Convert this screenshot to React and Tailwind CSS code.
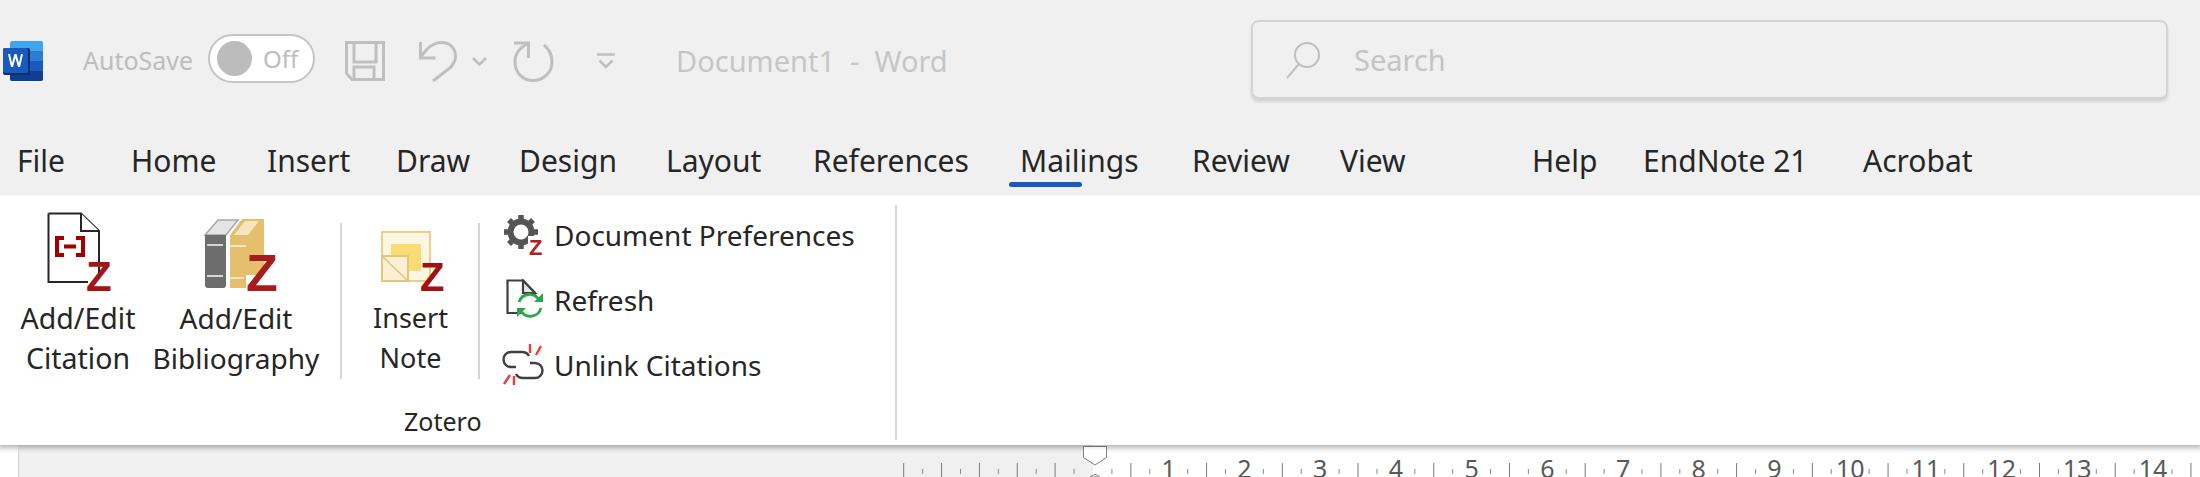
import React from 'react'

const font = { fontFamily: '"Noto Sans", "Open Sans", sans-serif' }

const tabs = [
  ['File', 'w-[114px]'],
  ['Home', 'w-[136px]'],
  ['Insert', 'w-[129px]'],
  ['Draw', 'w-[123px]'],
  ['Design', 'w-[147px]'],
  ['Layout', 'w-[147px]'],
  ['References', 'w-[207px]'],
  ['Mailings', 'w-[172px]'],
  ['Review', 'w-[148px]'],
  ['View', 'w-[192px]'],
  ['Help', 'w-[111px]'],
  ['EndNote 21', 'w-[220px]'],
  ['Acrobat', 'w-[120px]'],
]

function WordLogo() {
  return (
    <svg width="44" height="44" viewBox="0 0 44 44" className="shrink-0">
      <rect x="10" y="2" width="33" height="40" rx="2" fill="#41a5ee" />
      <rect x="10" y="12" width="33" height="10" fill="#2b7cd3" />
      <rect x="10" y="22" width="33" height="10" fill="#185abd" />
      <path d="M10 32h33v8a2 2 0 0 1-2 2H12a2 2 0 0 1-2-2z" fill="#103f91" />
      <rect x="3" y="9" width="27" height="27" rx="2" fill="#0d2f6e" />
      <rect x="3" y="9" width="25" height="25" rx="2" fill="#185abd" />
      <path d="M8 15l3 13h2l2.500-9 2.500 9h2l3-13h-2l-2 9-2.500-9h-2l-2.500 9-2-9z" fill="#fff" />
    </svg>
  )
}

function ZLetter({ x, y, size, fill = '#a31515' }) {
  return (
    <text x={x} y={y} fontSize={size} fontWeight="700" fill={fill} fontFamily='"Liberation Sans", sans-serif'>Z</text>
  )
}

function CitationIcon() {
  return (
    <svg width="66" height="80" viewBox="0 0 66 80" className="overflow-visible">
      <path d="M1.500 1.500H34L52 19v42M1.500 1.500V70H41" fill="none" stroke="#262626" strokeWidth="2" />
      <path d="M34 1.500V19h18" fill="#fff" stroke="#262626" strokeWidth="2" />
      <path d="M17 26H10v17h7M29 26h7v17h-7M17 34.500h12" fill="none" stroke="#a00000" strokeWidth="4" />
      <ZLetter x={39} y={79} size={42} />
    </svg>
  )
}

function BibliographyIcon() {
  return (
    <svg width="70" height="76" viewBox="0 0 70 76" className="overflow-visible">
      <path d="M1 19L14 4h20L22 19z" fill="#e4e4e4" stroke="#a8a8a8" strokeWidth="1.500" />
      <path d="M1 19h21v50a3 3 0 0 1-3 3H4a3 3 0 0 1-3-3z" fill="#6d6d6d" />
      <path d="M3 29h16M3 60h16" stroke="#d5d5d5" strokeWidth="2" />
      <path d="M26 19L38 3h22v56H42v13H26z" fill="#e6bf6e" />
      <path d="M30 19L41 5h14L44 19z" fill="#f5e6c0" />
      <path d="M26 30h16M26 62h14" stroke="#f5e6c0" strokeWidth="2" />
      <ZLetter x={42} y={75} size={52} fill="#a81c1c" />
    </svg>
  )
}

function NoteIcon() {
  return (
    <svg width="64" height="62" viewBox="0 0 64 62" className="overflow-visible">
      <rect x="2" y="2" width="48" height="49" fill="#fdf6e3" stroke="#eccf8d" strokeWidth="2" />
      <rect x="11" y="14" width="30" height="27" fill="#f8dc74" />
      <rect x="2" y="26" width="26" height="25" fill="#fbf0d5" stroke="#e5c47c" strokeWidth="2" />
      <path d="M3 27l25 24" stroke="#e5c47c" strokeWidth="1.500" />
      <ZLetter x={40} y={61} size={40} fill="#a31010" />
    </svg>
  )
}

function GearIcon() {
  return (
    <svg width="42" height="42" viewBox="0 0 42 42" className="overflow-visible">
      <circle cx="19" cy="18" r="10.500" fill="none" stroke="#555" strokeWidth="6" />
      <path d="M19 1v7M19 28v7M2 18h7M29 18h7M7 6l5 5M26 25l5 5M31 6l-5 5M12 25l-5 5" stroke="#555" strokeWidth="5.500" />
      <rect x="26" y="22" width="16" height="20" fill="#fff" />
      <ZLetter x={27} y={41} size={22} fill="#b02020" />
    </svg>
  )
}

function RefreshIcon() {
  return (
    <svg width="38" height="42" viewBox="0 0 38 42">
      <path d="M17 34H1.500V1.500H17L29 14v3" fill="none" stroke="#404040" strokeWidth="2.200" />
      <path d="M17 1.500V14h12z" fill="#e6e6e6" stroke="#404040" strokeWidth="2.200" />
      <path d="M13 23a11 11 0 0 1 20-2M35 29a11 11 0 0 1-20 3" fill="none" stroke="#2da44e" strokeWidth="2.800" />
      <path d="M37 14v9h-9zM11 38v-9h9z" fill="#2da44e" />
    </svg>
  )
}

function UnlinkIcon() {
  return (
    <svg width="42" height="42" viewBox="0 0 42 42">
      <path d="M14 23H9a7.500 7.500 0 0 1 0-15h12a7.500 7.500 0 0 1 6 4" fill="none" stroke="#404040" strokeWidth="2.400" />
      <path d="M28 19h5a7.500 7.500 0 0 1 0 15H20a7.500 7.500 0 0 1-6-4" fill="none" stroke="#404040" strokeWidth="2.400" />
      <path d="M28 0v9M39 2l-5 9M2 40l6-9M12 32v9" stroke="#ee3b3b" strokeWidth="2.400" />
    </svg>
  )
}

function LargeButton({ icon, lines, className, iconClass, textClass = 'text-[28.500px]' }) {
  return (
    <div className={`flex flex-col items-center shrink-0 ${className}`}>
      <div className={`flex items-end justify-center h-[79px] ${iconClass}`}>{icon}</div>
      <div className={`mt-[6px] text-center leading-[40px] text-[#262626] whitespace-nowrap ${textClass}`}>
        {lines.map((l) => <div key={l}>{l}</div>)}
      </div>
    </div>
  )
}

function SmallButton({ icon, label }) {
  return (
    <div className="flex items-center h-[65px]">
      <div className="w-[50px] flex justify-end mr-[1px]">{icon}</div>
      <span className="ml-[9px] text-[28px] text-[#262626] whitespace-nowrap">{label}</span>
    </div>
  )
}

function Ruler() {
  const ticks = []
  const x0 = 1093
  const step = 18.93
  for (let i = -10; i <= 58; i++) {
    const x = x0 + i * step
    const m = ((i % 4) + 4) % 4
    if (i === 0) continue
    if (m === 0) {
      if (i > 0) {
        const n = i / 4
        ticks.push(
          <text key={i} x={x} y="478" textAnchor="middle" fontSize="25" fill="#595959" fontFamily='"Noto Sans", sans-serif'>{n}</text>
        )
      } else {
        ticks.push(<line key={i} x1={x} x2={x} y1="463" y2="477" stroke="#7a7a7a" />)
      }
    } else if (m === 2) {
      ticks.push(<line key={i} x1={x} x2={x} y1="463" y2="477" stroke="#7a7a7a" />)
    } else {
      ticks.push(<line key={i} x1={x} x2={x} y1="469" y2="474" stroke="#8a8a8a" />)
    }
  }
  return (
    <svg width="2200" height="32" viewBox="0 445 2200 32" className="block">
      <rect x="0" y="445" width="2200" height="32" fill="#fff" />
      <rect x="18" y="445" width="1075" height="32" fill="#f0f0f0" />
      <rect x="0" y="445" width="2200" height="8" fill="url(#shade)" />
      <defs>
        <linearGradient id="shade" x1="0" y1="0" x2="0" y2="1">
          <stop offset="0" stopColor="#000" stopOpacity="0.16" />
          <stop offset="1" stopColor="#000" stopOpacity="0" />
        </linearGradient>
      </defs>
      <line x1="18.500" x2="18.500" y1="445" y2="477" stroke="#d4d4d4" />
      {ticks}
      <path d="M1083.500 446.500h23v11l-11.500 7.500-11.500-7.500z" fill="#fff" stroke="#7f7f7f" />
      <path d="M1095 474l5 3h-10z" fill="#fff" stroke="#8a8a8a" />
    </svg>
  )
}

export default function App() {
  return (
    <div className="w-[2200px] h-[477px] overflow-hidden bg-[#f0f0f0] flex flex-col" style={font}>
      {/* Title bar */}
      <div className="h-[125px] flex items-start pt-[20px] shrink-0">
        <div className="mt-[19px]"><WordLogo /></div>
        <span className="ml-[39px] mt-[23px] text-[25px] leading-[34px] text-[#bdbdbd] w-[125px] whitespace-nowrap">AutoSave</span>
        <div className="mt-[14px] w-[107px] h-[49px] rounded-full border-2 border-[#c4c4c4] bg-white flex items-center pl-[7px]">
          <div className="w-[35px] h-[35px] rounded-full bg-[#bcbcbc]" />
          <span className="ml-[11px] text-[24px] text-[#bdbdbd]">Off</span>
        </div>
        <svg width="40" height="40" viewBox="0 0 40 40" className="ml-[30px] mt-[21px]" fill="none" stroke="#bfbfbf" strokeWidth="3">
          <path d="M1.500 1.500h37v37H7l-5.500-6z" />
          <path d="M9 1.500V21h22V1.500M9 38.500V26h20v12.500" />
        </svg>
        <svg width="38" height="41" viewBox="0 0 38 41" className="ml-[34px] mt-[21px]" fill="none" stroke="#bfbfbf" strokeWidth="3">
          <path d="M1.500 1v16h15" />
          <path d="M1.500 17C7 8 13 1.500 23 1.500c9 0 13.500 7 13.500 14 0 5-2 7-5 11L14 40" />
        </svg>
        <svg width="15" height="9" viewBox="0 0 15 9" className="ml-[15px] mt-[37px]" fill="none" stroke="#bfbfbf" strokeWidth="2.500">
          <path d="M1 1l6.500 6.500L14 1" />
        </svg>
        <svg width="42" height="41" viewBox="0 0 42 41" className="ml-[26px] mt-[21px]" fill="none" stroke="#bfbfbf" strokeWidth="3">
          <path d="M1 2h14.500v15" />
          <path d="M14 3C6 7 2 13 2 21c0 11 8 18.500 18 18.500S39 32 39 21c0-7-3-13-8-17" />
        </svg>
        <svg width="20" height="17" viewBox="0 0 20 17" className="ml-[41px] mt-[33px]" fill="none" stroke="#bfbfbf" strokeWidth="2.500">
          <path d="M1 1.500h18M3.500 7.500L10 14l6.500-6.500" />
        </svg>
        <span className="ml-[60px] mt-[21px] text-[29px] leading-[40px] text-[#c6c6c6] whitespace-pre w-[575px]">Document1  -  Word</span>
        <div className="w-[917px] h-[80px] rounded-[8px] border-2 border-[#d4d4d4] border-b-[3px] shadow-[0_2px_3px_rgba(0,0,0,0.12)] flex items-center pl-[32px]">
          <svg width="36" height="38" viewBox="0 0 36 38" fill="none" stroke="#bfbfbf" strokeWidth="2">
            <circle cx="22" cy="14" r="12" />
            <path d="M14 23L2 37" />
          </svg>
          <span className="ml-[33px] text-[29px] text-[#c4c4c4]">Search</span>
        </div>
      </div>

      {/* Tabs */}
      <div className="h-[70px] flex items-start pl-[17px] text-[30px] leading-[40px] text-[#262626] shrink-0">
        {tabs.map(([t, w]) => (
          <div key={t} className={`relative whitespace-nowrap pt-[16px] ${w}`}>
            {t}
            {t === 'Mailings' && (
              <div className="absolute left-[-11px] top-[57px] w-[73px] h-[5px] rounded-full bg-[#185abd]" />
            )}
          </div>
        ))}
      </div>

      {/* Ribbon */}
      <div className="h-[250px] bg-white flex items-start shrink-0 relative z-10 shadow-[0_2px_4px_rgba(0,0,0,0.15)]">
        <div className="flex flex-col w-[897px] h-[235px] mt-[10px] border-r-2 border-[#d6d6d6]">
          <div className="flex items-start h-[175px] pl-[18px]">
            <LargeButton className="w-[120px] mt-[8px]" icon={<CitationIcon />} lines={['Add/Edit', 'Citation']} iconClass="ml-[3px]" />
            <LargeButton className="w-[168px] ml-[14px] mt-[8px]" icon={<BibliographyIcon />} lines={['Add/Edit', 'Bibliography']} iconClass="ml-[5px]" textClass="text-[28px]" />
            <div className="w-[2px] h-[156px] bg-[#d6d6d6] ml-[20px] mt-[18px]" />
            <LargeButton className="w-[135px] ml-[1px] mt-[8px]" icon={<NoteIcon />} lines={['Insert', 'Note']} iconClass="ml-[3px]" textClass="text-[27px]" />
            <div className="w-[2px] h-[156px] bg-[#d6d6d6] mt-[18px]" />
            <div className="ml-[14px] -mt-[3px] flex flex-col">
              <SmallButton icon={<GearIcon />} label="Document Preferences" />
              <SmallButton icon={<RefreshIcon />} label="Refresh" />
              <SmallButton icon={<UnlinkIcon />} label="Unlink Citations" />
            </div>
          </div>
          <div className="pl-[404px] mt-[24px] text-[25px] leading-[34px] text-[#262626]">Zotero</div>
        </div>
      </div>

      <Ruler />
    </div>
  )
}
